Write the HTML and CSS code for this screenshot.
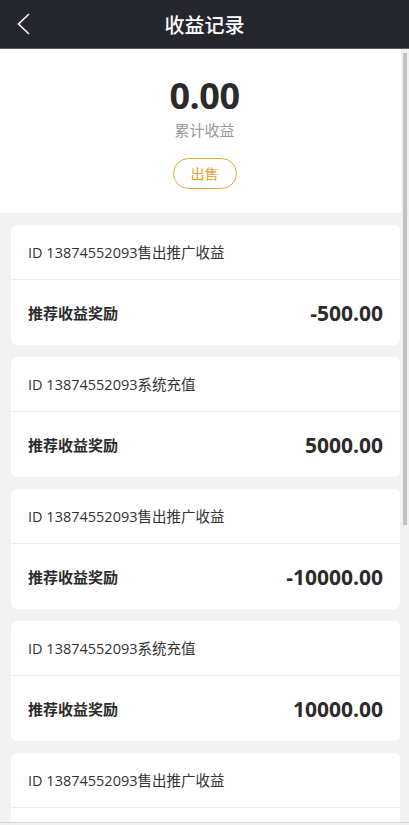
FILE: index.html
```html
<!DOCTYPE html>
<html lang="zh-CN">
<head>
<meta charset="utf-8">
<title>收益记录</title>
<link rel="stylesheet" href="styles.css">
</head>
<body>
<div class="app">
  <header class="topbar">
    <span class="back">
      <svg width="14" height="24" viewBox="0 0 14 24"><polyline points="12,1 1.5,11 12,21" fill="none" stroke="#ffffff" stroke-width="1.5"/></svg>
    </span>
    <h1 class="title">收益记录</h1>
  </header>
  <main class="scroller">
    <section class="summary">
      <div class="total">0.00</div>
      <div class="total-label">累计收益</div>
      <button class="sell">出售</button>
    </section>
    <section class="list">
      <div class="card">
        <div class="card-top">ID 13874552093售出推广收益</div>
        <div class="card-bottom"><span class="label">推荐收益奖励</span><span class="amount">-500.00</span></div>
      </div>
      <div class="card">
        <div class="card-top">ID 13874552093系统充值</div>
        <div class="card-bottom"><span class="label">推荐收益奖励</span><span class="amount">5000.00</span></div>
      </div>
      <div class="card">
        <div class="card-top">ID 13874552093售出推广收益</div>
        <div class="card-bottom"><span class="label">推荐收益奖励</span><span class="amount">-10000.00</span></div>
      </div>
      <div class="card">
        <div class="card-top">ID 13874552093系统充值</div>
        <div class="card-bottom"><span class="label">推荐收益奖励</span><span class="amount">10000.00</span></div>
      </div>
      <div class="card">
        <div class="card-top">ID 13874552093售出推广收益</div>
        <div class="card-bottom"><span class="label">推荐收益奖励</span><span class="amount">-5000.00</span></div>
      </div>
    </section>
    <div class="scroll-track"><div class="scroll-thumb"></div></div>
  </main>
  <div class="bottom-edge"></div>
</div>
</body>
</html>
```

FILE: styles.css
```css
* { box-sizing: border-box; }
html, body { margin: 0; padding: 0; height: 100%; overflow: hidden; }
body {
  font-family: "Open Sans", "Noto Sans CJK SC", sans-serif;
  color: #333;
  background: #f2f2f2;
}
.app { display: flex; flex-direction: column; height: 825px; }
.topbar {
  flex: 0 0 49px;
  height: 49px;
  background: #26262f;
  border-bottom: 1px solid #5a5a60;
  display: flex;
  align-items: center;
  justify-content: center;
  position: relative;
}
.back {
  position: absolute;
  left: 17px;
  top: 13px;
  width: 14px;
  height: 24px;
  display: block;
}
.back svg { display: block; }
.title {
  margin: 0;
  font-family: "Noto Sans CJK SC", sans-serif;
  font-size: 20px;
  font-weight: 500;
  color: #ffffff;
}
.scroller {
  flex: 0 0 773px;
  height: 773px;
  overflow: hidden;
  background: #f2f2f2;
  position: relative;
}
.scroll-track {
  position: absolute;
  top: 0;
  right: 0;
  width: 8px;
  height: 773px;
  background: #f1f1f1;
  padding: 4px 2px 0 2px;
}
.scroll-thumb {
  width: 4px;
  height: 472px;
  background: #c1c1c1;
}
.bottom-edge {
  flex: 1;
  border-top: 1px solid #d8d8d8;
  background: #f0f0f0;
}
.summary {
  background: #fff;
  height: 164px;
  padding-top: 25px;
  display: flex;
  flex-direction: column;
  align-items: center;
}
.total {
  font-size: 36px;
  font-weight: 700;
  line-height: 44px;
  height: 44px;
  color: #2b2b2b;
  letter-spacing: -0.5px;
}
.total-label {
  margin-top: 2px;
  font-family: "Noto Sans CJK SC", sans-serif;
  font-size: 15px;
  line-height: 20px;
  color: #999;
}
.sell {
  margin-top: 18px;
  width: 64px;
  height: 31px;
  border: 1px solid #e6a735;
  border-radius: 16px;
  background: #fff;
  color: #e6a02c;
  font-family: "Noto Sans CJK SC", sans-serif;
  font-size: 14px;
  padding: 0;
  line-height: 29px;
}
.list {
  display: flex;
  flex-direction: column;
  gap: 12px;
  padding: 12px 9px 12px 11px;
}
.card {
  background: #fff;
  border-radius: 6px;
  height: 120px;
  display: flex;
  flex-direction: column;
}
.card-top {
  height: 55px;
  border-bottom: 1px solid #ececec;
  padding: 0 17px 1px;
  display: flex;
  align-items: center;
  font-size: 14.5px;
  color: #333;
}
.card-bottom {
  flex: 1;
  display: flex;
  align-items: center;
  justify-content: space-between;
  padding: 0 17px;
}
.label {
  font-family: "Noto Sans CJK SC", sans-serif;
  font-weight: 700;
  font-size: 15px;
  color: #2b2b2b;
}
.amount {
  font-size: 21px;
  font-weight: 700;
  color: #2b2b2b;
}
```
